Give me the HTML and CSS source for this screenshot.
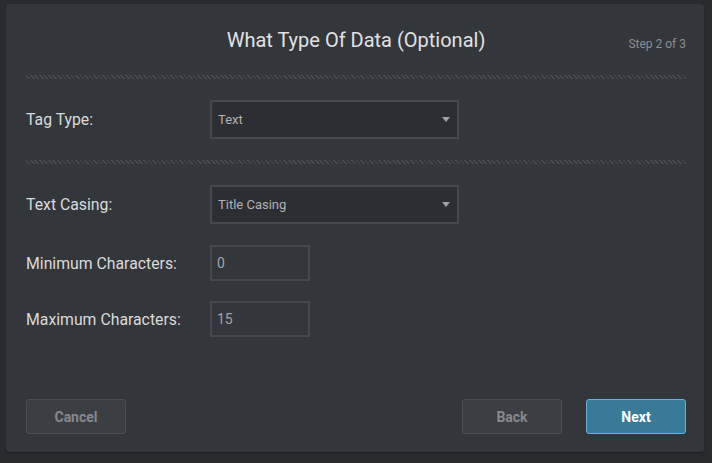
FILE: index.html
```html
<!DOCTYPE html>
<html>
<head>
<meta charset="utf-8">
<link rel="stylesheet" href="styles.css">
</head>
<body>
<div class="panel">
  <div class="header">
    <div></div>
    <h1 class="title">What Type Of Data (Optional)</h1>
    <div class="step">Step 2 of 3</div>
  </div>
  <div class="divider"></div>
  <div class="section">
    <div class="row">
      <label class="label">Tag Type:</label>
      <div class="select"><span>Text</span><span class="caret"></span></div>
    </div>
  </div>
  <div class="divider"></div>
  <div class="section">
    <div class="row row-spaced">
      <label class="label">Text Casing:</label>
      <div class="select"><span>Title Casing</span><span class="caret"></span></div>
    </div>
    <div class="row">
      <label class="label">Minimum Characters:</label>
      <div class="input">0</div>
    </div>
    <div class="row">
      <label class="label">Maximum Characters:</label>
      <div class="input">15</div>
    </div>
  </div>
  <div class="footer">
    <button class="btn btn-muted">Cancel</button>
    <div class="footer-right">
      <button class="btn btn-muted">Back</button>
      <button class="btn btn-primary">Next</button>
    </div>
  </div>
</div>
</body>
</html>
```

FILE: styles.css
```css
* { box-sizing: border-box; }
html, body { margin: 0; padding: 0; }
body {
  background: #292b2f;
  width: 712px;
  height: 463px;
  padding: 4px 8px 11px 6px;
  font-family: Roboto, "Liberation Sans", sans-serif;
}
.panel {
  background: #33363b;
  width: 698px;
  height: 448px;
  border-radius: 3px;
  padding: 0 18px 18px 20px;
  display: flex;
  flex-direction: column;
  box-shadow: 0 1px 2px rgba(0,0,0,0.35);
}
.header {
  height: 71px;
  display: grid;
  grid-template-columns: 1fr auto 1fr;
  align-items: center;
}
.title {
  margin: 0;
  font-size: 20px;
  font-weight: 400;
  color: #e1e1e1;
  padding-top: 1px;
}
.step {
  justify-self: end;
  font-size: 12px;
  color: #8c8f93;
  padding-top: 8px;
}
.divider {
  height: 4px;
  background: repeating-linear-gradient(45deg, #33363b 0 2px, #484b50 2px 3.2px);
}
.section {
  padding: 21px 0;
  display: flex;
  flex-direction: column;
  gap: 20px;
}
.row {
  display: flex;
  align-items: center;
}
.row-spaced {
  margin-bottom: 1px;
}
.label {
  width: 184px;
  font-size: 15.8px;
  color: #dadada;
}
.select {
  width: 249px;
  height: 39px;
  background: #2c2e33;
  border: 2px solid #45484d;
  display: flex;
  align-items: center;
  justify-content: space-between;
  padding: 0 7px 0 6px;
  font-size: 13px;
  color: #b2b2b2;
}
.caret {
  width: 0;
  height: 0;
  border-left: 4px solid transparent;
  border-right: 4px solid transparent;
  border-top: 5px solid #a3a3a3;
}
.input {
  width: 100px;
  height: 36px;
  border: 2px solid #45484d;
  background: #33363b;
  display: flex;
  align-items: center;
  padding: 0 5px;
  font-size: 14px;
  color: #a2a4a7;
}
.footer {
  margin-top: auto;
  display: flex;
  justify-content: space-between;
  align-items: center;
}
.footer-right {
  display: flex;
  gap: 24px;
}
.btn {
  width: 100px;
  height: 35px;
  border-radius: 3px;
  font-family: Roboto, "Liberation Sans", sans-serif;
  font-weight: 700;
  font-size: 14px;
  cursor: pointer;
}
.btn-muted {
  background: #3b3e43;
  border: 1px solid #4b4e53;
  color: #87898d;
}
.btn-primary {
  background: #3a7a99;
  border: 1px solid #62b3e0;
  color: #ffffff;
}
```
